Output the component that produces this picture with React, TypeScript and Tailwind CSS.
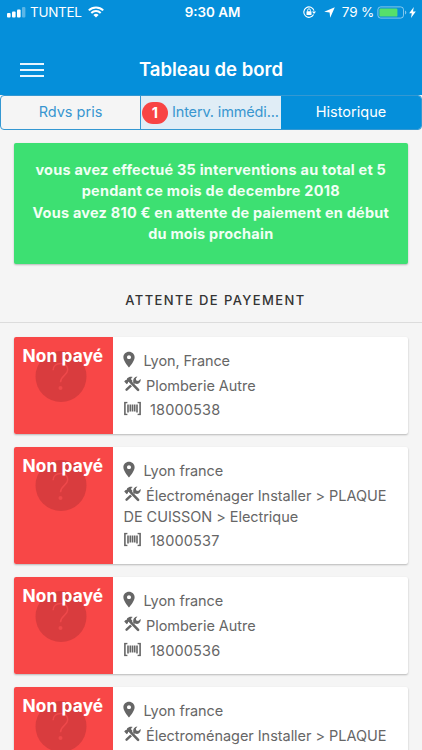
import { IoMdPin } from "react-icons/io";

type Job = { place: string; lines: string[]; ref: string; height: string };

const jobs: Job[] = [
  { place: "Lyon, France", lines: ["Plomberie Autre"], ref: "18000538", height: "h-[96.5px]" },
  {
    place: "Lyon france",
    lines: ["Électroménager Installer > PLAQUE", "DE CUISSON > Electrique"],
    ref: "18000537",
    height: "h-[117px]",
  },
  { place: "Lyon france", lines: ["Plomberie Autre"], ref: "18000536", height: "h-[96.5px]" },
  { place: "Lyon france", lines: ["Électroménager Installer > PLAQUE"], ref: "", height: "h-[117px]" },
];

function StatusBar() {
  return (
    <div className="flex h-6 items-center pl-[7px] pr-[5px] text-[13.5px] text-white">
      <div className="flex flex-1 items-center">
        <svg width="19" height="11" viewBox="0 0 19 11" fill="white">
          <rect x="0" y="6" width="3.6" height="4.5" rx="1" />
          <rect x="5" y="4.5" width="3.6" height="6" rx="1" />
          <rect x="10" y="2.5" width="3.6" height="8" rx="1" />
          <rect x="15" y="0" width="3.4" height="10.5" rx="1" opacity=".35" />
        </svg>
        <span className="ml-[4px] tracking-[-0.3px]">TUNTEL</span>
        <svg className="ml-[6.5px]" width="16" height="12" viewBox="0 0 16 12" fill="none" stroke="white" strokeWidth="2">
          <path d="M.8 4.4a10.2 10.2 0 0 1 14.4 0M3.3 7a6.7 6.7 0 0 1 9.4 0" />
          <path d="M8 11.6 5.4 9a3.7 3.7 0 0 1 5.2 0Z" fill="white" stroke="none" />
        </svg>
      </div>
      <span className="translate-x-[0.5px] text-[13.4px] font-semibold">9:30 AM</span>
      <div className="flex flex-1 items-center justify-end">
        <svg width="13" height="12" viewBox="0 0 13 12" fill="none" stroke="white">
          <path d="M10.6 8.6A5.2 5.2 0 1 1 11 4.6" strokeWidth="1.1" />
          <path d="M9 5.4h4L11 8Z" fill="white" stroke="none" />
          <rect x="3.5" y="5.2" width="5" height="3.7" rx=".5" fill="white" stroke="none" />
          <path d="M4.6 5.5V4.2a1.4 1.4 0 0 1 2.8 0v1.3" strokeWidth=".9" />
        </svg>
        <svg className="ml-[8px]" width="11" height="11" viewBox="0 0 11 11" fill="white">
          <path d="M10.8.2 6.2 10.8 5.6 5.4.2 4.8Z" />
        </svg>
        <span className="ml-[7px] whitespace-nowrap text-[13.5px] tracking-[-0.2px]">79 %</span>
        <svg className="ml-[3px]" width="40" height="13" viewBox="0 0 40 13">
          <rect x=".9" y=".9" width="25.6" height="11.2" rx="2.8" fill="none" stroke="white" strokeOpacity=".5" />
          <rect x="2.4" y="2.4" width="18" height="8.2" rx="1.2" fill="#56e06c" />
          <path d="M28 4.5c1.8.7 1.8 3.3 0 4Z" fill="white" opacity=".5" />
          <path d="m36.8 1-4.6 6.3h2.6l-.8 4.8 4.8-6.5H36Z" fill="white" />
        </svg>
      </div>
    </div>
  );
}

/* Hammer crossed over an open-ended wrench */
function ToolsIcon() {
  return (
    <svg className="-translate-y-[2px]" width="17" height="16" viewBox="0 0 17 16" fill="none">
      <path d="M2.6 13.6 11.2 5.6" stroke="#666" strokeWidth="2.5" strokeLinecap="round" />
      <path d="M13.4.5a4 4 0 0 0-3.9 5.4l1.7 1.7A4 4 0 0 0 16.6 3l-2.5 2-1.8-.4-.5-1.8Z" fill="#666" />
      <path d="m6.4 6.2 7.7 7.8" stroke="white" strokeWidth="3.6" />
      <path d="m5.7 5.2 8.4 8.6" stroke="#666" strokeWidth="2.6" strokeLinecap="round" />
      <path
        d="M8.8.9C6.4.2 4.6.9 3.2 2.3L2.5 4 1.6 4.1.2 5.5l2.5 2.7L4 6.9l.1-1 1.3-.5 1.6 1.3 1.7-1.7-1.5-1.6c-.2-1 .5-1.9 1.6-2.5Z"
        fill="#666"
      />
    </svg>
  );
}

function BarcodeIcon() {
  return (
    <svg className="-translate-y-[1.5px]" width="17" height="14" viewBox="0 0 17 14" fill="none" stroke="#666">
      <path d="M3.4 1H.9v12h2.5M13.6 1h2.5v12h-2.5" strokeWidth="1.6" />
      <path d="M4 3v8M6.3 3v7M8.5 3v7M10.7 3v7M13 3v8" strokeWidth="1.6" />
    </svg>
  );
}

function JobCard({ job }: { job: Job }) {
  return (
    <article
      className={`flex shrink-0 overflow-hidden rounded-[2px] bg-white shadow-[0_1px_2px_rgba(0,0,0,0.25)] ${job.height}`}
    >
      <div className="relative flex w-[99px] shrink-0 justify-center bg-[#f84747]">
        <div className="mt-[13.5px] flex size-[51px] -translate-x-[2.5px] items-center justify-center rounded-full bg-[#d93c3e]">
          <svg width="18" height="30" viewBox="0 0 18 30" fill="none" stroke="#ee484a" strokeWidth="1.5">
            <path d="M1.6 9.3C1.6 5 4.6 2.4 9 2.4s7.2 2.6 7.2 6.4c0 5.6-7.2 5.6-7.2 12.4" />
            <circle cx="9" cy="27" r="2" fill="#ee484a" stroke="none" />
          </svg>
        </div>
        <span className="absolute left-[9px] top-[7px] whitespace-nowrap text-[17.3px] font-bold leading-[24px] tracking-[0.12px] text-white">
          Non payé
        </span>
      </div>
      <div className="flex-1 whitespace-nowrap pl-[11px] pt-[13px] text-[14.5px] leading-[22px] text-[#666]">
        <p className="flex items-center">
          <IoMdPin className="-ml-[4px] size-[18px] -translate-y-[1.5px]" />
          <span className="ml-[6px] tracking-[-0.1px]">{job.place}</span>
        </p>
        <div className="mt-[3px]">
          <p className="flex items-center">
            <ToolsIcon />
            <span className="ml-[5.5px] tracking-[-0.04px]">{job.lines[0]}</span>
          </p>
          {job.lines[1] && <p className="-mt-[1px] tracking-[-0.05px]">{job.lines[1]}</p>}
        </div>
        {job.ref && (
          <p className="mt-[2.4px] flex items-center">
            <BarcodeIcon />
            <span className="ml-[9.5px] tracking-[0.15px]">{job.ref}</span>
          </p>
        )}
      </div>
    </article>
  );
}

export default function App() {
  return (
    <div className="flex h-[750px] w-[422px] flex-col overflow-hidden bg-[#f5f5f5] font-['Inter','Liberation_Sans',sans-serif]">
      <header className="h-[95px] shrink-0 bg-[#058fda]">
        <StatusBar />
        <div className="flex h-[71px] items-center pt-[20px]">
          <div className="ml-[20px] flex w-6 flex-col gap-[4px]">
            <i className="h-[2px] bg-[#e8f6ff]" />
            <i className="h-[2px] bg-[#e8f6ff]" />
            <i className="h-[2px] bg-[#e8f6ff]" />
          </div>
          <h1 className="flex-1 pr-[44px] text-center text-[18.5px] font-semibold text-white">Tableau de bord</h1>
        </div>
      </header>
      <nav className="flex h-[35px] shrink-0 overflow-hidden rounded-[4px] border border-[#3498d2] text-[14.5px] text-[#3896d0]">
        <div className="flex w-[139px] items-center justify-center pb-[1px]">Rdvs pris</div>
        <div className="flex w-[141px] items-center whitespace-nowrap border-l border-[#3498d2] bg-[#e0edf6] pl-[1px]">
          <span className="flex h-[22px] w-[26px] items-center justify-center rounded-full bg-[#f84444] font-bold text-white">
            1
          </span>
          <span className="ml-[4px] pb-[1px] tracking-[-0.15px]">Interv. immédi...</span>
        </div>
        <div className="flex flex-1 items-center justify-center bg-[#058fda] pb-[1px] text-white">Historique</div>
      </nav>
      <section className="ml-[13.5px] mr-[14px] mt-[13px] h-[121px] shrink-0 whitespace-nowrap rounded-[2px] bg-[#3de072] pt-[17px] text-center text-[14.5px] font-bold leading-[20.5px] tracking-[0.22px] text-[#f1fff5] shadow-[0_1px_2px_rgba(0,0,0,0.25)]">
        <p>
          vous avez effectué 35 interventions au total et 5
          <br />
          pendant ce mois de decembre 2018
        </p>
        <p className="mt-[2px]">
          Vous avez 810 € en attente de paiement en début
          <br />
          du mois prochain
        </p>
      </section>
      <h2 className="flex h-[59px] shrink-0 items-center justify-center border-b border-[#dcdcdc] pl-[9px] pt-[16px] text-[13px] font-medium tracking-[1.4px] text-[#333]">
        ATTENTE DE PAYEMENT
      </h2>
      <main className="flex flex-col gap-[13.4px] pl-[13.5px] pr-[14px] pt-[14px]">
        {jobs.map((job, i) => (
          <JobCard key={i} job={job} />
        ))}
      </main>
    </div>
  );
}
